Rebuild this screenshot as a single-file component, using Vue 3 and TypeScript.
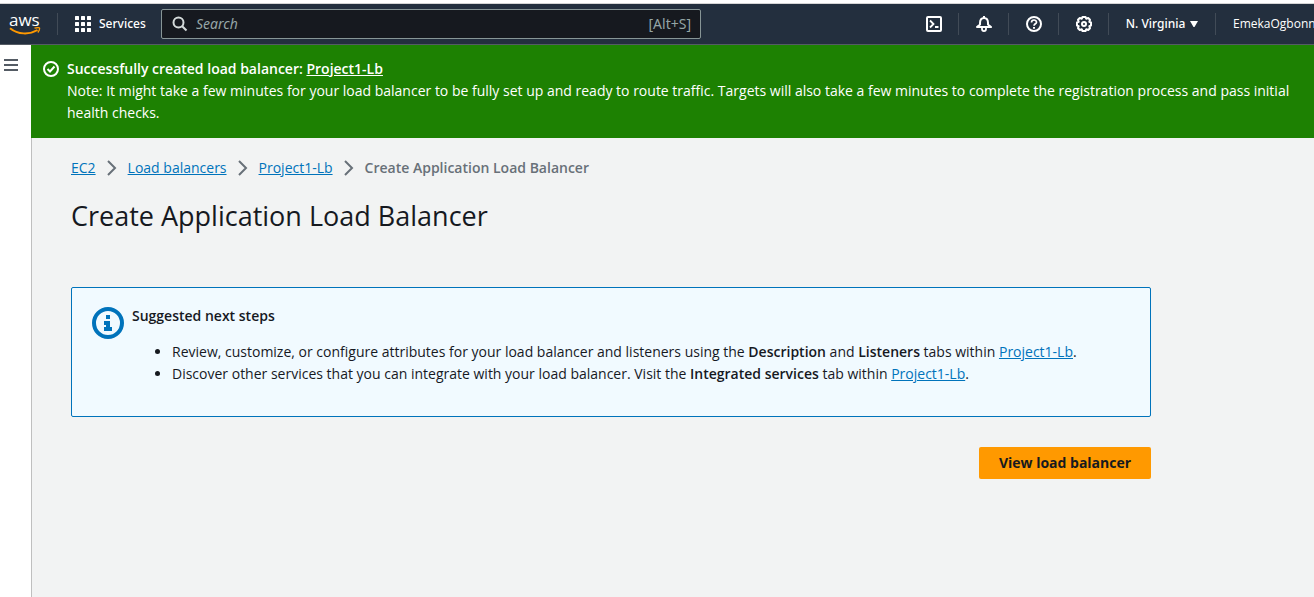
<script setup lang="ts">
import { ref } from 'vue'

interface Crumb {
  label: string
  href: string
}

const balancer = 'Project1-Lb'
const query = ref('')
const crumbs: Crumb[] = [
  { label: 'EC2', href: '#ec2' },
  { label: 'Load balancers', href: '#load-balancers' },
  { label: balancer, href: '#project1-lb' },
]
const cells = [0, 6, 12]
</script>

<template>
  <div class="console">
    <header class="topbar">
      <a class="logo" href="#home" aria-label="AWS home">
        <span class="logo-word">aws</span>
        <svg class="smile" width="32" height="8" viewBox="0 0 32 8" fill="none" stroke="#ff9900" aria-hidden="true">
          <path d="M1 1.200C9 7.600 20 8 28.500 3" stroke-width="2" />
          <path d="M25.500 1.200C28 .5 30 .5 30.500 1C30.800 2 30 4 28.800 5.500" stroke-width="1.300" />
        </svg>
      </a>
      <button class="services" type="button">
        <svg width="16" height="16" viewBox="0 0 16 16" fill="#fff" aria-hidden="true">
          <template v-for="y in cells" :key="y">
            <rect v-for="x in cells" :key="x" :x="x" :y="y" width="4" height="4" rx="0.5" />
          </template>
        </svg>
        Services
      </button>
      <label class="search">
        <svg width="16" height="16" viewBox="0 0 16 16" fill="none" stroke="#d5dbdb" stroke-width="2" aria-hidden="true">
          <circle cx="6.500" cy="6.500" r="5" />
          <path d="M10.200 10.200L14.500 14.500" />
        </svg>
        <input v-model="query" type="search" placeholder="Search" aria-label="Search" />
        <span class="shortcut">[Alt+S]</span>
      </label>
      <nav class="tools" aria-label="Console tools">
        <button class="tool" type="button" aria-label="CloudShell">
          <svg width="16" height="16" viewBox="0 0 16 16" fill="none" stroke="#fff" stroke-width="2">
            <rect x="1" y="1" width="14" height="14" rx="1" />
            <path d="M4 4.500L7.500 8L4 11.500M9 11H12.500" stroke-width="1.800" />
          </svg>
        </button>
        <button class="tool" type="button" aria-label="Notifications">
          <svg width="16" height="16" viewBox="0 0 16 16" fill="none" stroke="#fff" stroke-width="2" stroke-linejoin="round">
            <path d="M8 0V2M1 11L4 8.500V7C4 4 5.500 2 8 2S12 4 12 7V8.500L15 11Z" />
            <path d="M6 11.500V13C6 15.700 10 15.700 10 13V11.500" stroke-width="1.800" />
          </svg>
        </button>
        <button class="tool" type="button" aria-label="Help">
          <svg width="16" height="16" viewBox="0 0 16 16" fill="none" stroke="#fff" stroke-width="2">
            <circle cx="8" cy="8" r="7" />
            <path d="M5.500 6.500C5.500 3.200 10.500 3.300 10.500 6.200C10.500 7.800 8 7.800 8 9.800" stroke-width="1.700" />
            <path d="M8 11V12.800" />
          </svg>
        </button>
        <button class="tool" type="button" aria-label="Settings">
          <svg width="16" height="16" viewBox="0 0 16 16" fill="none" stroke="#fff" stroke-width="2">
            <path d="M6.500 1H9.500L10.200 2.700L12.200 2L14 3.800L13.300 5.800L15 6.500V9.500L13.300 10.200L14 12.200L12.200 14L10.200 13.300L9.500 15H6.500L5.800 13.300L3.800 14L2 12.200L2.700 10.200L1 9.500V6.500L2.700 5.800L2 3.800L3.800 2L5.800 2.700Z" stroke-width="2" stroke-linejoin="round" />
            <circle cx="8" cy="8" r="2" stroke-width="2" />
          </svg>
        </button>
        <button class="region" type="button">
          N. Virginia
          <svg width="8" height="6" viewBox="0 0 8 6" fill="#fff" aria-hidden="true"><path d="M0 0H8L4.500 6H3.500Z" /></svg>
        </button>
        <button class="account" type="button">EmekaOgbonn</button>
      </nav>
    </header>

    <div class="body">
      <aside class="rail">
        <button class="menu" type="button" aria-label="Open navigation">
          <svg width="14" height="12" viewBox="0 0 14 12" fill="none" stroke="#545b64" stroke-width="2">
            <path d="M0 1H14M0 6H14M0 11H14" />
          </svg>
        </button>
      </aside>
      <div class="page">
        <section class="flash" role="status">
          <svg class="check" width="16" height="16" viewBox="0 0 16 16" fill="none" stroke="#fff" stroke-width="2" aria-hidden="true">
            <circle cx="8" cy="8" r="7" />
            <path d="M4.500 8L7 10.500L11.500 5.500" />
          </svg>
          <div>
            <strong>Successfully created load balancer: <a href="#project1-lb">{{ balancer }}</a></strong>
            <p>Note: It might take a few minutes for your load balancer to be fully set up and ready to route traffic. Targets will also take a few minutes to complete the registration process and pass initial health checks.</p>
          </div>
        </section>

        <main class="content">
          <nav aria-label="Breadcrumbs">
            <ol class="crumbs">
              <li v-for="crumb in crumbs" :key="crumb.label">
                <a :href="crumb.href">{{ crumb.label }}</a>
                <svg width="16" height="16" viewBox="0 0 16 16" fill="none" stroke="#687078" stroke-width="2" aria-hidden="true">
                  <path d="M4 1L11 8L4 15" />
                </svg>
              </li>
              <li class="current" aria-current="page">Create Application Load Balancer</li>
            </ol>
          </nav>
          <h1>Create Application Load Balancer</h1>
          <section class="info">
            <svg class="info-icon" width="32" height="32" viewBox="0 0 32 32" aria-hidden="true">
              <circle cx="16" cy="16" r="14" fill="none" stroke="#0073bb" stroke-width="4" />
              <path d="M14 8H18V12H14ZM12 14H18V20H20V24H12V20H14V18H12Z" fill="#0073bb" />
            </svg>
            <div>
              <h2>Suggested next steps</h2>
              <ul>
                <li>Review, customize, or configure attributes for your load balancer and listeners using the <b>Description</b> and <b>Listeners</b> tabs within <a href="#project1-lb">{{ balancer }}</a>.</li>
                <li>Discover other services that you can integrate with your load balancer. Visit the <b>Integrated services</b> tab within <a href="#project1-lb">{{ balancer }}</a>.</li>
              </ul>
            </div>
          </section>
          <div class="actions">
            <button class="primary" type="button">View load balancer</button>
          </div>
        </main>
      </div>
    </div>
  </div>
</template>

<style>
body {
  margin: 0;
  background: #fff;
}
</style>

<style scoped>
.console {
  display: flex;
  flex-direction: column;
  min-height: 100vh;
  box-sizing: border-box;
  padding-top: 3px;
  overflow: hidden;
  font-family: "Open Sans", "Noto Sans", sans-serif;
  font-size: 14px;
  line-height: 22px;
  color: #16191f;
}
button {
  margin: 0;
  padding: 0;
  border: 0;
  background: none;
  color: inherit;
  font: inherit;
  cursor: pointer;
}
strong,
b {
  font-weight: 600;
}
svg {
  display: block;
  flex: none;
}
.topbar {
  display: flex;
  align-items: center;
  height: 40px;
  border-top: 1px solid #d5d5d5;
  border-bottom: 1px solid #545b64;
  background: #232f3e;
  color: #fff;
  font-family: "Noto Sans", sans-serif;
  font-size: 12px;
  font-weight: 500;
}
.logo {
  flex: none;
  width: 48px;
  padding-left: 9px;
  color: #fff;
  text-decoration: none;
}
.logo-word {
  display: block;
  font-family: "Open Sans", sans-serif;
  font-size: 17px;
  font-weight: 500;
  line-height: 14px;
}
.services {
  display: flex;
  align-items: center;
  gap: 8px;
  flex: none;
  width: 104px;
  height: 22px;
  padding-left: 17px;
  box-sizing: border-box;
  border-left: 1px solid #414b57;
}
.search {
  display: flex;
  align-items: center;
  gap: 8px;
  width: 540px;
  height: 30px;
  box-sizing: border-box;
  padding: 0 9px 0 10px;
  border: 1px solid #879596;
  border-radius: 2px;
  background: #16191f;
  color: #95a5a6;
  font-size: 14px;
  font-weight: 400;
}
.search input {
  flex: 1;
  min-width: 0;
  padding: 0;
  border: 0;
  outline: 0;
  background: none;
  color: #fff;
  font: inherit;
}
.search input::placeholder {
  color: #95a5a6;
  font-style: italic;
  opacity: 1;
}
.tools {
  display: flex;
  align-items: center;
  margin-left: auto;
  width: 405px;
}
.tool {
  display: flex;
  justify-content: center;
  flex: none;
  width: 50px;
  padding: 3px 0;
  box-sizing: border-box;
  border-right: 1px solid #414b57;
}
.region {
  display: flex;
  align-items: center;
  justify-content: center;
  gap: 5px;
  flex: none;
  width: 107px;
  box-sizing: border-box;
  border-right: 1px solid #414b57;
}
.account {
  flex: none;
  padding-left: 17px;
  font-family: "Open Sans", "Noto Sans", sans-serif;
}
.body {
  display: flex;
  flex: 1;
}
.rail {
  flex: none;
  width: 31px;
}
.menu {
  padding: 14px 4px;
}
.page {
  display: flex;
  flex-direction: column;
  flex: 1;
  min-width: 0;
  border-left: 1px solid #bfbfbf;
  background: #f2f3f3;
}
.flash {
  display: flex;
  gap: 8px;
  margin-left: -1px;
  padding: 13px 12px 14px;
  background: #1d8102;
  color: #fff;
}
.flash .check {
  margin-top: 3px;
}
.flash a {
  color: #fff;
}
.flash p {
  margin: 0;
}
.content {
  max-width: 1080px;
  padding: 19px 39px;
}
.crumbs {
  display: flex;
  margin: 0;
  padding: 0;
  list-style: none;
}
.crumbs li {
  display: flex;
  align-items: center;
}
.crumbs svg {
  margin: 0 8px;
}
.crumbs .current {
  color: #687078;
  font-weight: 600;
}
a {
  color: #0073bb;
}
h1 {
  margin: 19px 0 53px;
  font-size: 27px;
  font-weight: 400;
  line-height: 36px;
}
.info {
  display: flex;
  gap: 8px;
  padding: 17px 20px 31px;
  border: 1px solid #0073bb;
  border-radius: 2px;
  background: #f1faff;
}
.info-icon {
  margin-top: 2px;
}
h2 {
  margin: 0 0 14px;
  font-size: 14px;
  font-weight: 600;
  line-height: 22px;
}
.info ul {
  margin: 0;
  padding-left: 40px;
}
.actions {
  display: flex;
  justify-content: flex-end;
  margin-top: 30px;
}
.primary {
  min-width: 172px;
  height: 32px;
  border-radius: 2px;
  background: #ff9900;
  font-weight: 700;
}
</style>
